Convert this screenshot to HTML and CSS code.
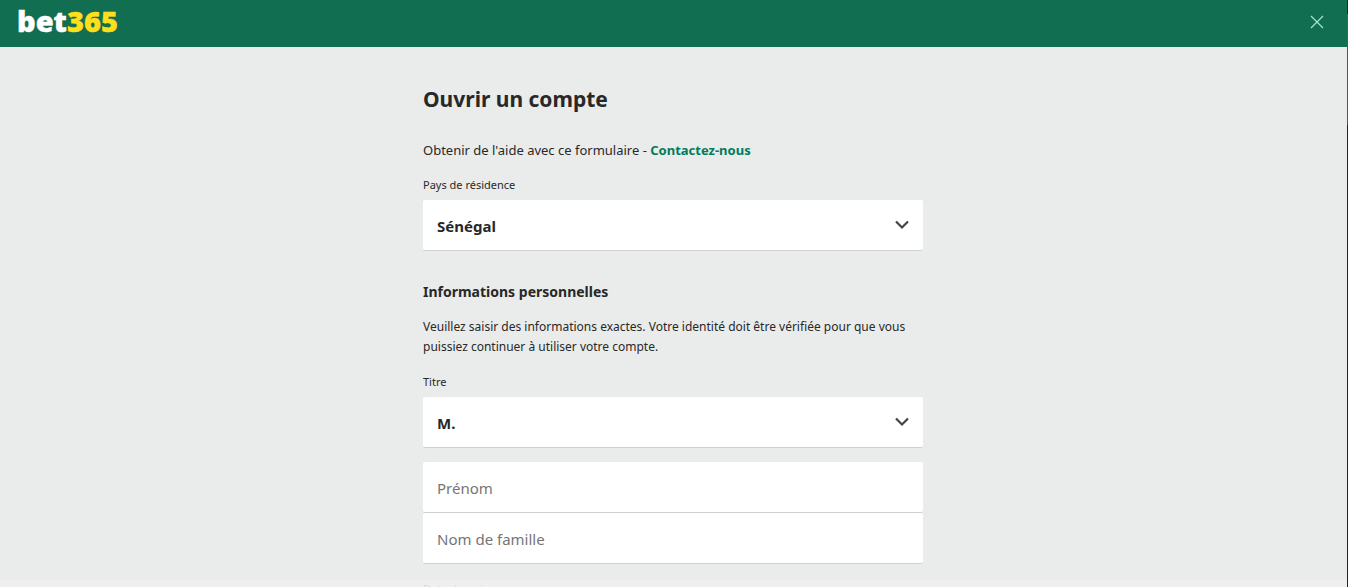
FILE: index.html
```html
<!DOCTYPE html>
<html lang="fr">
<head>
<meta charset="utf-8">
<meta name="viewport" content="width=device-width, initial-scale=1">
<title>bet365 - Ouvrir un compte</title>
<link rel="stylesheet" href="styles.css">
</head>
<body>
<header class="header">
  <a class="logo" href="#" aria-label="bet365">bet<span class="logo-number">365</span></a>
  <button class="close" type="button" aria-label="Fermer">
    <svg width="14" height="14" viewBox="0 0 14 14" aria-hidden="true"><path d="M1 1l12 12M13 1L1 13" fill="none" stroke="currentColor" stroke-width="1.2"/></svg>
  </button>
</header>
<main class="page">
  <form class="form">
    <h1 class="title">Ouvrir un compte</h1>
    <p class="text help">Obtenir de l'aide avec ce formulaire - <a class="link" href="#">Contactez-nous</a></p>
    <label class="label" for="country">Pays de résidence</label>
    <div class="select-box">
      <select class="select" id="country"><option>Sénégal</option></select>
      <svg class="chevron" width="14" height="10" viewBox="0 0 14 10" aria-hidden="true"><path d="M1 1.5l6 6 6-6" fill="none" stroke="currentColor" stroke-width="2.2"/></svg>
    </div>
    <h2 class="subtitle">Informations personnelles</h2>
    <p class="text intro">Veuillez saisir des informations exactes. Votre identité doit être vérifiée pour que vous puissiez continuer à utiliser votre compte.</p>
    <label class="label" for="title">Titre</label>
    <div class="select-box">
      <select class="select" id="title"><option>M.</option></select>
      <svg class="chevron" width="14" height="10" viewBox="0 0 14 10" aria-hidden="true"><path d="M1 1.5l6 6 6-6" fill="none" stroke="currentColor" stroke-width="2.2"/></svg>
    </div>
    <div class="names">
      <input class="input" type="text" placeholder="Prénom" aria-label="Prénom">
      <input class="input" type="text" placeholder="Nom de famille" aria-label="Nom de famille">
    </div>
    <p class="label birth">Date de naissance</p>
  </form>
</main>
<div class="fade"></div>
<div class="edge"></div>
</body>
</html>
```
FILE: styles.css
```css
* { box-sizing: border-box; }
html { height: 100%; }
body {
  height: 100%;
  margin: 0;
  display: flex;
  flex-direction: column;
  overflow: hidden;
  background: #eaeceb;
  color: #282828;
  font-family: "Segoe UI", "Noto Sans", "Open Sans", sans-serif;
}
.header {
  flex: none;
  display: flex;
  align-items: center;
  justify-content: space-between;
  height: 47px;
  padding: 0 17px;
  background: #126e51;
}
.logo {
  color: #fff;
  font: 900 29px/42px "Noto Sans", sans-serif;
  padding-bottom: 5px;
  text-decoration: none;
  -webkit-text-stroke: 0.4px currentColor;
}
.logo-number { color: #ffdf1b; }
.close {
  display: flex;
  padding: 7px;
  margin-bottom: 3px;
  border: 0;
  background: none;
  color: #a5e5cf;
}
.page { flex: 1; min-height: 0; overflow: hidden; padding: 0 18px 0 16px; }
.form { max-width: 500px; margin: 0 auto; padding-top: 36px; }
.title { margin: 0; font-size: 21px; line-height: 32px; font-weight: 700; }
.text { margin: 0; font-size: 12px; line-height: 20px; }
.help { margin-top: 25px; font-size: 13px; }
.link { color: #007b5b; font-weight: 700; text-decoration: none; }
.label { display: block; margin: 17px 0 7px; font-size: 11px; line-height: 16px; }
.select-box { position: relative; }
.select, .input {
  display: block;
  width: 100%;
  height: 51px;
  margin: 0;
  padding: 2px 14px 0;
  border: 0;
  border-bottom: 1px solid #cfd0d0;
  border-radius: 2px;
  background: #fff;
  color: #282828;
  font-family: inherit;
  font-size: 15px;
}
.select { appearance: none; font-weight: 700; }
.input::placeholder { color: #757575; opacity: 1; }
.chevron {
  position: absolute;
  top: 20px;
  right: 14px;
  color: #444;
  pointer-events: none;
}
.subtitle { margin: 31px 0 15px; font-size: 14px; line-height: 20px; font-weight: 700; }
.names { margin-top: 14px; }
.birth { margin-bottom: 0; }
.fade {
  position: fixed;
  left: 0;
  right: 0;
  bottom: 0;
  height: 7px;
  background: rgba(240, 240, 240, 0.9);
}
.edge {
  position: fixed;
  top: 0;
  right: 0;
  bottom: 0;
  width: 1px;
  background: linear-gradient(#1c2624 14px, #555 14px, #555 125px, #1c2624 125px);
}
```
